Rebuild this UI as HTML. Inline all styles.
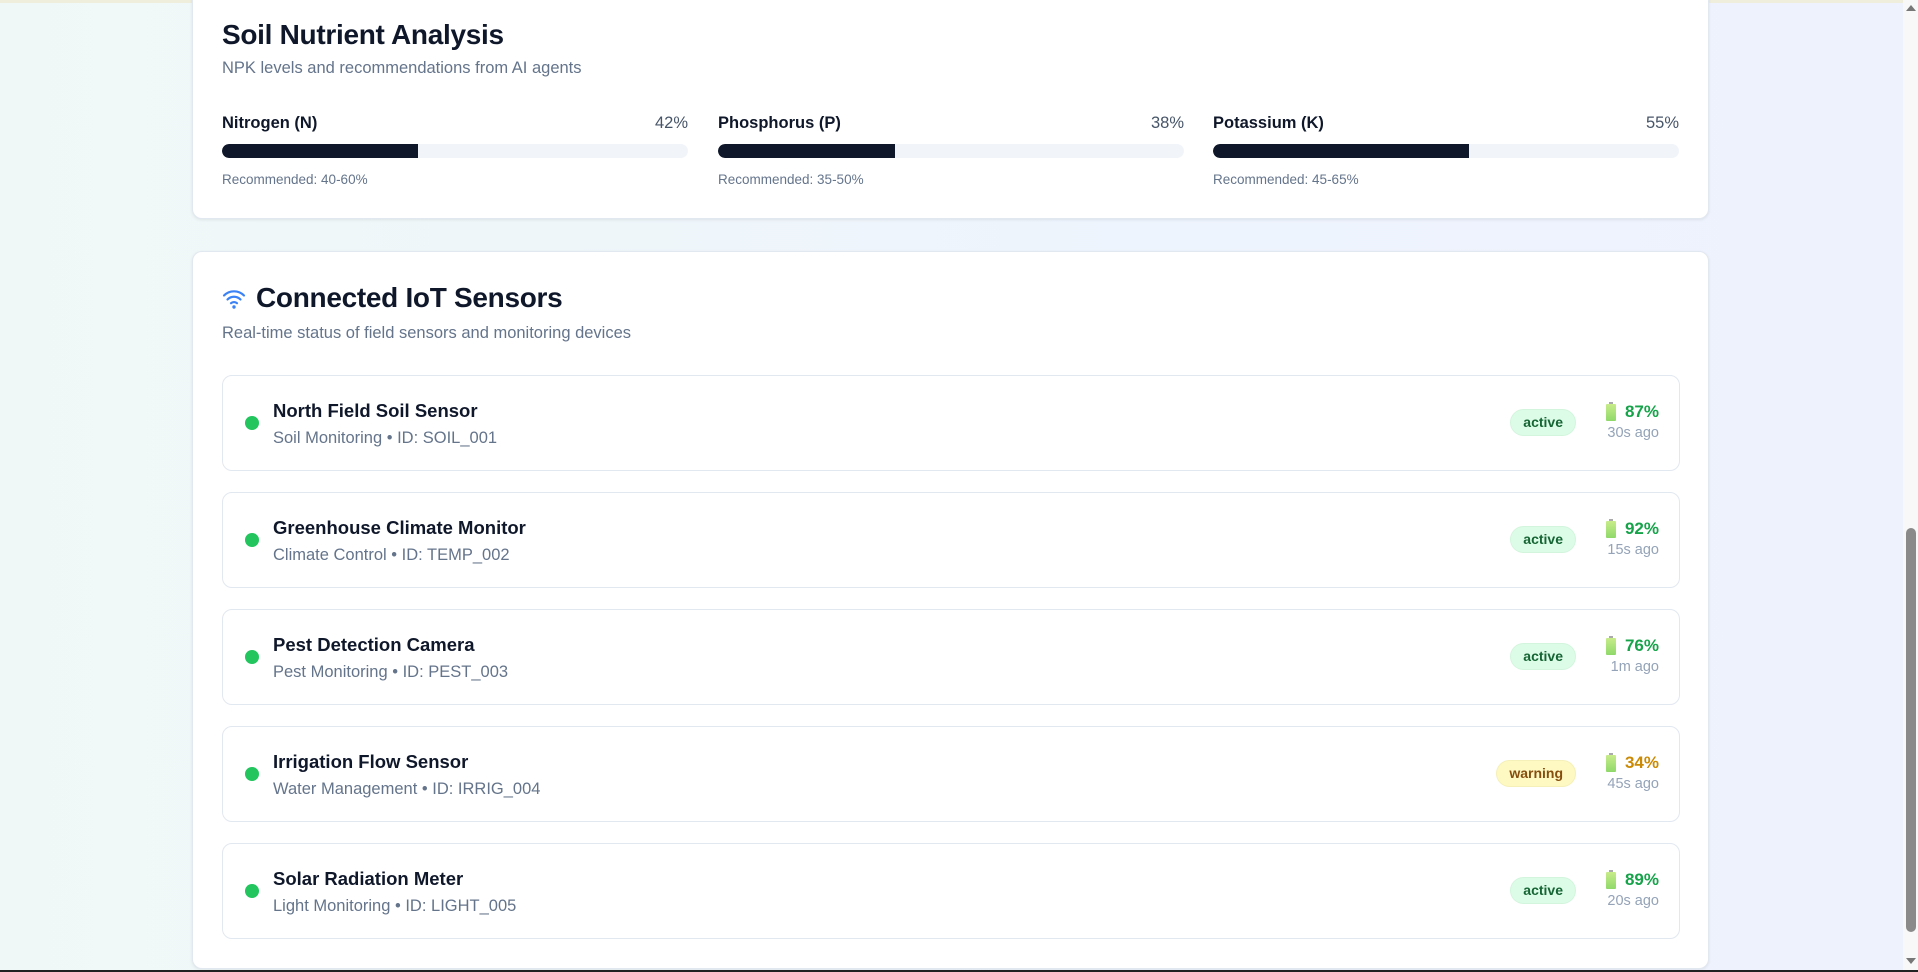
<!DOCTYPE html>
<html><head><meta charset="utf-8"><style>
*{box-sizing:border-box;margin:0;padding:0}
html,body{width:1918px;height:972px;overflow:hidden}
body{font-family:"Liberation Sans",sans-serif;background:linear-gradient(90deg,#f0f8f7 0%,#eef4fd 60%,#eef2fd 100%);position:relative;color:#0f172a}
.topline{position:absolute;left:0;top:0;width:1903px;height:3px;background:#efeedd}
.card{position:absolute;left:192px;width:1517px;background:#fff;border:1px solid #e2e8f0;border-radius:10px;box-shadow:0 1px 3px rgba(0,0,0,.08)}
h2{font-size:28px;font-weight:600;color:#0f172a;position:absolute;left:29px;letter-spacing:-.3px}
.sub{position:absolute;left:29px;font-size:16.5px;color:#64748b}
.nut{position:absolute;top:133px;width:466px}
.nut .lab{display:flex;justify-content:space-between;font-size:16.5px}
.nut .lab b{font-weight:600;color:#0f172a}
.nut .lab span{color:#475569}
.bar{margin-top:11px;height:14px;background:#f1f5f9;border-radius:7px;overflow:hidden}
.bar i{display:block;height:100%;background:#0f172a;border-radius:7px 0 0 7px}
.rec{margin-top:14px;font-size:13.5px;color:#64748b}
.row{position:absolute;left:29px;width:1458px;height:96px;border:1px solid #e2e8f0;border-radius:10px;background:#fff}
.dot{position:absolute;left:22px;top:40px;width:14px;height:14px;border-radius:50%;background:#22c55e}
.nm{position:absolute;left:50px;top:24px;font-size:18.5px;font-weight:600;color:#0f172a}
.ds{position:absolute;left:50px;top:53px;font-size:16.5px;color:#64748b}
.badge{position:absolute;top:33px;height:27px;border-radius:14px;font-size:14px;font-weight:600;line-height:25px;padding:0 12px;border:1px solid}
.act{right:103px;background:#dcfce7;color:#166534;border-color:#d3f5dd}
.warn{right:103px;background:#fef9c3;color:#854d0e;border-color:#f5efb8}
.bat{position:absolute;right:20px;top:26px;text-align:right}
.bat .p{font-size:17px;font-weight:600;display:flex;align-items:center;justify-content:flex-end;gap:9px}
.bat .t{font-size:14.5px;color:#94a3b8;margin-top:3px}
.g{color:#16a34a}.o{color:#ca8a04}
.bi{width:10px;height:17px;display:inline-block;position:relative;background:linear-gradient(#c8ec8a,#8fd86a);border-radius:1px}
.bi:before{content:"";position:absolute;top:-2px;left:3px;width:4px;height:2px;background:#aaa}
.sb{position:absolute;right:0;top:0;width:15px;height:972px;background:#f8f8f8}
.th{position:absolute;right:2px;top:528px;width:10px;height:404px;background:#8a8a8a;border-radius:5px}
.bottom{position:absolute;left:0;bottom:0;width:1918px;height:2px;background:#222}
</style></head><body>
<div class="topline"></div>
<div class="card" style="top:-20px;height:239px">
 <h2 style="top:38px">Soil Nutrient Analysis</h2>
 <div class="sub" style="top:78px">NPK levels and recommendations from AI agents</div>
 <div class="nut" style="left:29px"><div class="lab"><b>Nitrogen (N)</b><span>42%</span></div><div class="bar"><i style="width:42%"></i></div><div class="rec">Recommended: 40-60%</div></div>
 <div class="nut" style="left:525px"><div class="lab"><b>Phosphorus (P)</b><span>38%</span></div><div class="bar"><i style="width:38%"></i></div><div class="rec">Recommended: 35-50%</div></div>
 <div class="nut" style="left:1020px"><div class="lab"><b>Potassium (K)</b><span>55%</span></div><div class="bar"><i style="width:55%"></i></div><div class="rec">Recommended: 45-65%</div></div>
</div>
<div class="card" style="top:251px;height:718px">
 <svg style="position:absolute;left:29px;top:36px" width="24" height="22" viewBox="0 0 24 22" fill="none" stroke="#3b82f6" stroke-width="2.2" stroke-linecap="round"><path d="M2 7.5a14 14 0 0 1 20 0"/><path d="M5.5 11.5a9 9 0 0 1 13 0"/><path d="M9 15.2a4.5 4.5 0 0 1 6 0"/><circle cx="12" cy="19" r=".6" fill="#3b82f6"/></svg>
 <h2 style="left:63px;top:30px">Connected IoT Sensors</h2>
 <div class="sub" style="top:72px">Real-time status of field sensors and monitoring devices</div>

 <div class="row" style="top:123px"><div class="dot"></div><div class="nm">North Field Soil Sensor</div><div class="ds">Soil Monitoring • ID: SOIL_001</div><div class="badge act">active</div><div class="bat"><div class="p g"><span class="bi"></span>87%</div><div class="t">30s ago</div></div></div>
 <div class="row" style="top:240px"><div class="dot"></div><div class="nm">Greenhouse Climate Monitor</div><div class="ds">Climate Control • ID: TEMP_002</div><div class="badge act">active</div><div class="bat"><div class="p g"><span class="bi"></span>92%</div><div class="t">15s ago</div></div></div>
 <div class="row" style="top:357px"><div class="dot"></div><div class="nm">Pest Detection Camera</div><div class="ds">Pest Monitoring • ID: PEST_003</div><div class="badge act">active</div><div class="bat"><div class="p g"><span class="bi"></span>76%</div><div class="t">1m ago</div></div></div>
 <div class="row" style="top:474px"><div class="dot"></div><div class="nm">Irrigation Flow Sensor</div><div class="ds">Water Management • ID: IRRIG_004</div><div class="badge warn">warning</div><div class="bat"><div class="p o"><span class="bi"></span>34%</div><div class="t">45s ago</div></div></div>
 <div class="row" style="top:591px"><div class="dot"></div><div class="nm">Solar Radiation Meter</div><div class="ds">Light Monitoring • ID: LIGHT_005</div><div class="badge act">active</div><div class="bat"><div class="p g"><span class="bi"></span>89%</div><div class="t">20s ago</div></div></div>
</div>
<div class="sb"><div style="position:absolute;left:3px;top:5px;border:5px solid transparent;border-bottom:6px solid #777;border-top:0"></div><div class="th"></div><div style="position:absolute;left:3px;bottom:8px;border:5px solid transparent;border-top:6px solid #777;border-bottom:0"></div></div>
<div class="bottom"></div>
</body></html>
